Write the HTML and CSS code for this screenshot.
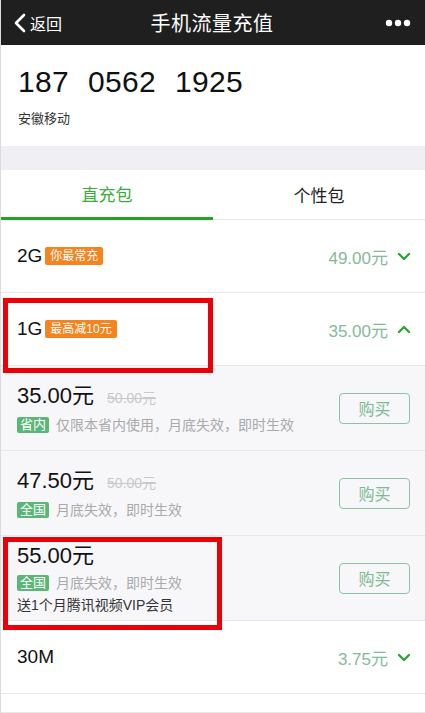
FILE: index.html
```html
<!DOCTYPE html>
<html lang="zh-CN">
<head>
    <meta charset="UTF-8">
    <meta name="viewport" content="width=device-width, initial-scale=1.0">
    <title>手机流量充值</title>
    <link rel="stylesheet" href="styles.css">
</head>
<body>
    <div class="page">
        <div class="topbar">
            <div class="back">
                <svg width="14" height="20" viewBox="0 0 14 20"><polyline points="11,2 3,10 11,18" fill="none" stroke="#fff" stroke-width="2.6" stroke-linecap="round" stroke-linejoin="round"/></svg>
                <span>返回</span>
            </div>
            <div class="title">手机流量充值</div>
            <div class="more">
                <svg width="26" height="8" viewBox="0 0 26 8"><circle cx="4" cy="4" r="3.2" fill="#fff"/><circle cx="13" cy="4" r="3.2" fill="#fff"/><circle cx="22" cy="4" r="3.2" fill="#fff"/></svg>
            </div>
        </div>

        <div class="phone-box">
            <div class="phone-number"><span>187</span><span>0562</span><span>1925</span></div>
            <div class="carrier">安徽移动</div>
        </div>

        <div class="gap"></div>

        <div class="tabs">
            <div class="tab active">直充包</div>
            <div class="tab">个性包</div>
        </div>

        <div class="row">
            <div class="row-left">
                <span class="size">2G</span>
                <span class="badge">你最常充</span>
            </div>
            <div class="row-right">
                <span class="price">49.00元</span>
                <svg class="arrow" width="14" height="9" viewBox="0 0 14 9"><polyline points="2,2 7,7 12,2" fill="none" stroke="#2ea336" stroke-width="2.4" stroke-linecap="round" stroke-linejoin="round"/></svg>
            </div>
        </div>

        <div class="row">
            <div class="row-left">
                <span class="size">1G</span>
                <span class="badge">最高减10元</span>
            </div>
            <div class="row-right">
                <span class="price">35.00元</span>
                <svg class="arrow" width="14" height="9" viewBox="0 0 14 9"><polyline points="2,7 7,2 12,7" fill="none" stroke="#2ea336" stroke-width="2.4" stroke-linecap="round" stroke-linejoin="round"/></svg>
            </div>
            <div class="mark mark-one"></div>
        </div>

        <div class="packs">
            <div class="pack">
                <div class="pack-info">
                    <div class="pack-price">35.00元<span class="old">50.00元</span></div>
                    <div class="pack-desc"><span class="tag">省内</span>仅限本省内使用，月底失效，即时生效</div>
                </div>
                <button class="buy">购买</button>
            </div>
            <div class="pack">
                <div class="pack-info">
                    <div class="pack-price">47.50元<span class="old">50.00元</span></div>
                    <div class="pack-desc"><span class="tag">全国</span>月底失效，即时生效</div>
                </div>
                <button class="buy">购买</button>
            </div>
            <div class="pack">
                <div class="pack-info">
                    <div class="pack-price">55.00元</div>
                    <div class="pack-desc"><span class="tag">全国</span>月底失效，即时生效</div>
                    <div class="gift">送1个月腾讯视频VIP会员</div>
                </div>
                <button class="buy">购买</button>
                <div class="mark mark-two"></div>
            </div>
        </div>

        <div class="row">
            <div class="row-left">
                <span class="size">30M</span>
            </div>
            <div class="row-right">
                <span class="price">3.75元</span>
                <svg class="arrow" width="14" height="9" viewBox="0 0 14 9"><polyline points="2,2 7,7 12,2" fill="none" stroke="#2ea336" stroke-width="2.4" stroke-linecap="round" stroke-linejoin="round"/></svg>
            </div>
        </div>
        <div class="row-end"></div>
    </div>
</body>
</html>
```

FILE: styles.css
```css
/* base */
body {
    margin: 0;
    font-family: "Liberation Sans", "Noto Sans CJK SC", sans-serif;
    color: #111;
    background: #fff;
}
.page {
    width: 425px;
    height: 713px;
    overflow: hidden;
    border-left: 1px solid #dcdcdc;
    box-sizing: border-box;
}

/* barra superior */
.topbar {
    height: 45px;
    background-color: #1f1f1f;
    display: grid;
    grid-template-columns: 1fr auto 1fr;
    align-items: center;
    padding: 0 14px 0 12px;
}
.back {
    display: flex;
    align-items: center;
    gap: 3px;
    color: #fff;
    font-size: 16px;
}
.title {
    color: #fff;
    font-size: 20px;
    letter-spacing: 0.5px;
}
.more {
    display: flex;
    justify-content: flex-end;
}

/* numero */
.phone-box {
    padding: 19px 17px 0;
    height: 101px;
    box-sizing: border-box;
}
.phone-number {
    font-size: 30px;
    line-height: 36px;
    letter-spacing: 0.3px;
}
.phone-number span {
    margin-right: 19px;
}
.carrier {
    margin-top: 8px;
    font-size: 13px;
    color: #333;
}
.gap {
    height: 24px;
    background-color: #efeff4;
}

/* abas */
.tabs {
    display: flex;
    height: 50px;
    border-bottom: 1px solid #e6e6e6;
    box-sizing: border-box;
}
.tab {
    flex: 1;
    display: flex;
    align-items: center;
    justify-content: center;
    font-size: 17px;
    color: #222;
}
.tab.active {
    color: #3aab3d;
    border-bottom: 3px solid #1fa621;
    margin-bottom: -1px;
}

/* linhas */
.row {
    position: relative;
    height: 72px;
    display: flex;
    align-items: center;
    justify-content: space-between;
    padding: 0 14px 0 16px;
    border-bottom: 1px solid #e8e8e8;
}
.row-left {
    display: flex;
    align-items: center;
    gap: 3px;
}
.size {
    font-size: 19px;
    color: #111;
}
.badge {
    background-color: #f5831e;
    color: #fff;
    font-size: 12px;
    line-height: 18px;
    padding: 0 5px;
    border-radius: 2px;
}
.row-right {
    display: flex;
    align-items: center;
    gap: 9px;
}
.price {
    font-size: 17px;
    color: #86b99a;
}
.row-end {
    height: 18px;
    border-bottom: 1px solid #e8e8e8;
    background: #fff;
}

/* pacotes abertos */
.packs {
    background-color: #f7f7f9;
}
.pack {
    position: relative;
    min-height: 85px;
    display: flex;
    align-items: center;
    justify-content: space-between;
    padding: 6px 15px 6px 16px;
    border-bottom: 1px solid #e8e8ea;
    box-sizing: border-box;
}
.pack-price {
    font-size: 22px;
    line-height: 26px;
    color: #111;
}
.old {
    font-size: 14px;
    color: #c8c8c8;
    text-decoration: line-through;
    margin-left: 13px;
}
.pack-desc {
    margin-top: 5px;
    display: flex;
    align-items: center;
    font-size: 14px;
    line-height: 18px;
    color: #a9a9a9;
}
.tag {
    background-color: #5bb777;
    color: #fff;
    font-size: 13px;
    line-height: 16px;
    padding: 0 3px;
    border-radius: 2px;
    margin-right: 7px;
}
.gift {
    margin-top: 4px;
    font-size: 14px;
    line-height: 18px;
    color: #333;
}
.buy {
    width: 71px;
    height: 31px;
    border: 1px solid #8cc3a2;
    border-radius: 4px;
    background: transparent;
    color: #7dbb93;
    font-family: "Noto Sans CJK SC", sans-serif;
    font-size: 16px;
}

/* marcacoes vermelhas por cima */
.mark {
    position: absolute;
    border: 5px solid #ec0008;
    box-sizing: border-box;
}
.mark-one {
    left: 2px;
    top: 5px;
    width: 210px;
    height: 75px;
}
.mark-two {
    left: 2px;
    top: 1px;
    width: 219px;
    height: 93px;
}
```
